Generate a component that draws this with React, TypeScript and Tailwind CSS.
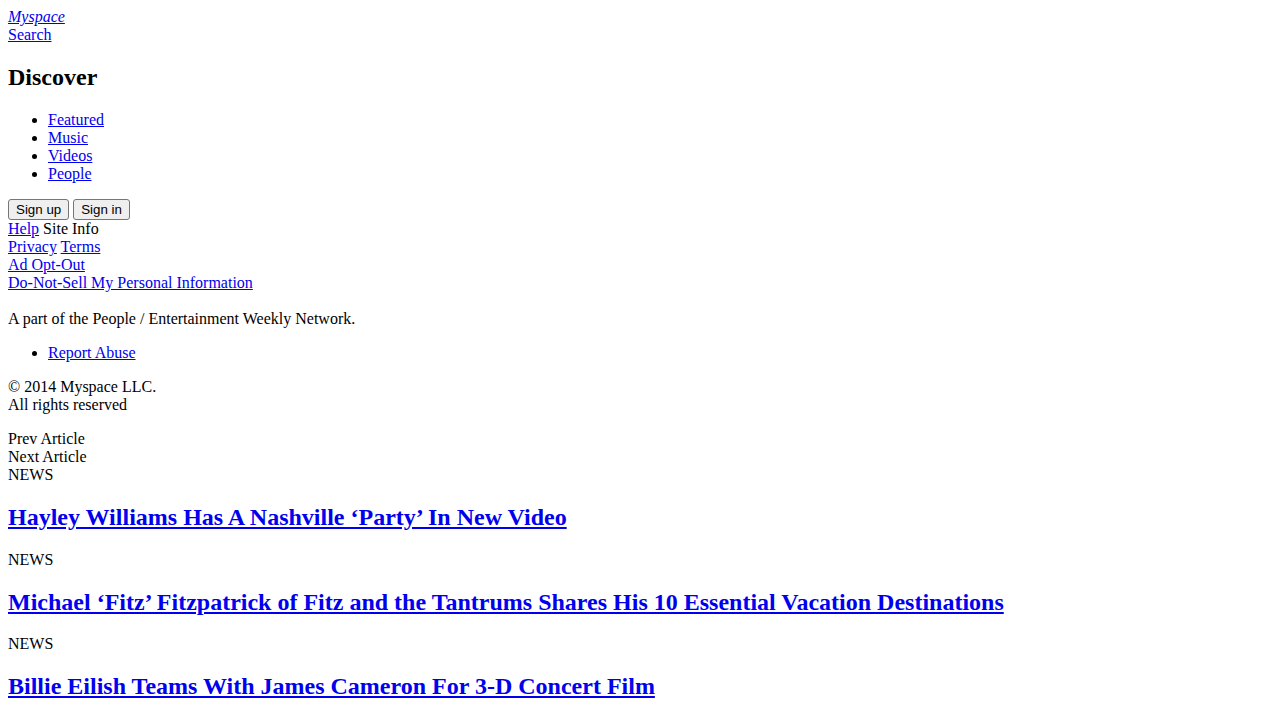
import React from "react";

const A = ({ children, className = "" }: { children: React.ReactNode; className?: string }) => (
  <a href="#" className={`text-[#0000ee] underline ${className}`}>
    {children}
  </a>
);

const Btn = ({ children }: { children: React.ReactNode }) => (
  <button className="inline-block px-[7px] py-[2px] border border-[#767676] rounded-[3px] bg-[#efefef] text-black text-[13.333px] leading-[normal] font-['Liberation_Sans',Arial,sans-serif]">
    {children}
  </button>
);

export default function App() {
  return (
    <div className="p-2 bg-white text-black text-[16px] leading-[normal] font-['Liberation_Serif','Times_New_Roman',serif] min-h-[720px]">
      <div>
        <A className="italic">Myspace</A>
      </div>
      <div>
        <A>Search</A>
      </div>
      <h2 className="text-[24px] font-bold my-[19.92px]">Discover</h2>
      <ul className="list-disc pl-10 my-4">
        <li>
          <A>Featured</A>
        </li>
        <li>
          <A>Music</A>
        </li>
        <li>
          <A>Videos</A>
        </li>
        <li>
          <A>People</A>
        </li>
      </ul>
      <div>
        <Btn>Sign up</Btn> <Btn>Sign in</Btn>
      </div>
      <div>
        <A>Help</A> Site Info
      </div>
      <div>
        <A>Privacy</A> <A>Terms</A>
      </div>
      <div>
        <A>Ad Opt-Out</A>
      </div>
      <div>
        <A>Do-Not-Sell My Personal Information</A>
      </div>
      <p className="mt-[18px] mb-4">A part of the People / Entertainment Weekly Network.</p>
      <ul className="list-disc pl-10 my-4">
        <li>
          <A>Report Abuse</A>
        </li>
      </ul>
      <p className="my-4">
        © 2014 Myspace LLC.
        <br />
        All rights reserved
      </p>
      <div>Prev Article</div>
      <div>Next Article</div>
      <div>NEWS</div>
      <h2 className="text-[24px] font-bold my-[19.92px]">
        <A>Hayley Williams Has A Nashville ‘Party’ In New Video</A>
      </h2>
      <div>NEWS</div>
      <h2 className="text-[24px] font-bold my-[19.92px]">
        <A>Michael ‘Fitz’ Fitzpatrick of Fitz and the Tantrums Shares His 10 Essential Vacation Destinations</A>
      </h2>
      <div>NEWS</div>
      <h2 className="text-[24px] font-bold my-[19.92px]">
        <A>Billie Eilish Teams With James Cameron For 3-D Concert Film</A>
      </h2>
    </div>
  );
}
